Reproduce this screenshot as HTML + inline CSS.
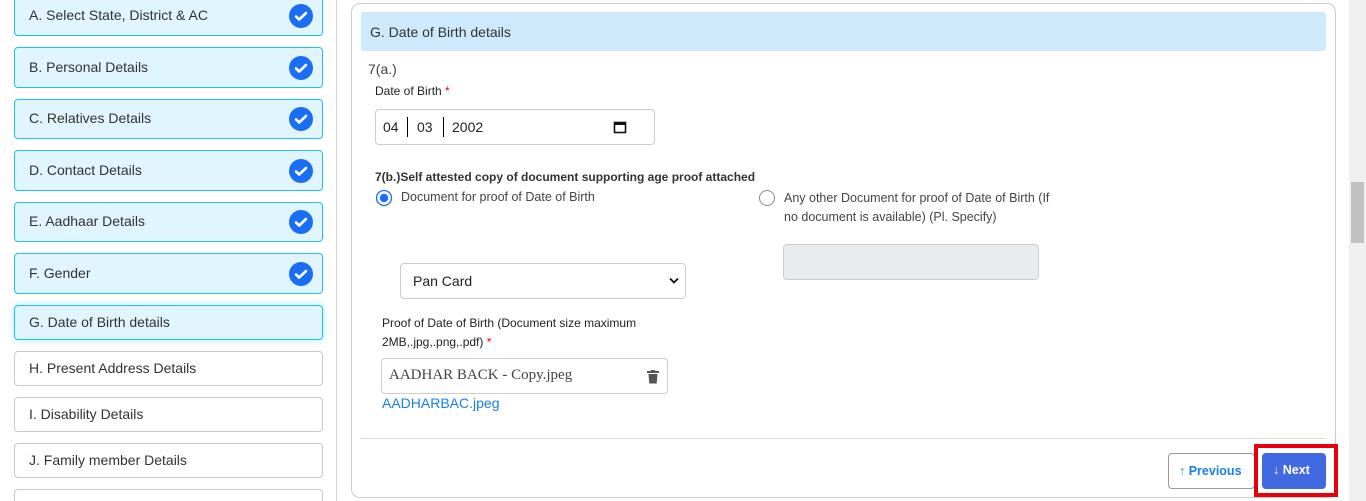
<!DOCTYPE html>
<html style="width:1366px;height:501px;overflow:hidden"><head><meta charset="utf-8"><style>
*{box-sizing:border-box;margin:0;padding:0}
body{width:1366px;height:501px;overflow:hidden;background:#fff;font-family:"Liberation Sans",Arial,sans-serif;color:#212529;position:relative}
.a{position:absolute}
.item{position:absolute;left:14px;width:309px;border:1px solid #c8c8c8;border-radius:4px;font-size:14px;color:#333;padding-left:14px;padding-bottom:2px;display:flex;align-items:center;background:#fff}
.done{background:#e0f5fd;border-color:#1ec0f0}
.chk{position:absolute;right:9px;top:50%;margin-top:-12px;width:24px;height:24px;border-radius:50%;background:#1a6ef5}
.lbl{font-size:12px;color:#222}
.star{color:#e00}
.t13{font-size:13px;color:#444}
</style></head><body>
<div class="item done" style="top:-4px;height:40px">A. Select State, District &amp; AC<span class="chk"><svg width="24" height="24"><path d="M7 12.5l3.2 3L17 9" stroke="#fff" stroke-width="2.6" fill="none" stroke-linecap="round" stroke-linejoin="round"/></svg></span></div>
<div class="item done" style="top:47px;height:41px">B. Personal Details<span class="chk"><svg width="24" height="24"><path d="M7 12.5l3.2 3L17 9" stroke="#fff" stroke-width="2.6" fill="none" stroke-linecap="round" stroke-linejoin="round"/></svg></span></div>
<div class="item done" style="top:99px;height:40px">C. Relatives Details<span class="chk"><svg width="24" height="24"><path d="M7 12.5l3.2 3L17 9" stroke="#fff" stroke-width="2.6" fill="none" stroke-linecap="round" stroke-linejoin="round"/></svg></span></div>
<div class="item done" style="top:150px;height:41px">D. Contact Details<span class="chk"><svg width="24" height="24"><path d="M7 12.5l3.2 3L17 9" stroke="#fff" stroke-width="2.6" fill="none" stroke-linecap="round" stroke-linejoin="round"/></svg></span></div>
<div class="item done" style="top:202px;height:40px">E. Aadhaar Details<span class="chk"><svg width="24" height="24"><path d="M7 12.5l3.2 3L17 9" stroke="#fff" stroke-width="2.6" fill="none" stroke-linecap="round" stroke-linejoin="round"/></svg></span></div>
<div class="item done" style="top:253px;height:41px">F. Gender<span class="chk"><svg width="24" height="24"><path d="M7 12.5l3.2 3L17 9" stroke="#fff" stroke-width="2.6" fill="none" stroke-linecap="round" stroke-linejoin="round"/></svg></span></div>
<div class="item done" style="top:305px;height:35px;box-shadow:0 0 8px rgba(30,192,240,.35)">G. Date of Birth details</div>
<div class="item" style="top:351px;height:35px">H. Present Address Details</div>
<div class="item" style="top:397px;height:35px">I. Disability Details</div>
<div class="item" style="top:443px;height:35px">J. Family member Details</div>
<div class="item" style="top:489px;height:12px;border-bottom:none;border-radius:4px 4px 0 0"></div>
<div class="a" style="left:336px;top:0;width:1px;height:501px;background:#d4d4d4"></div>
<div class="a" style="left:351px;top:3px;width:985px;height:495px;border:1px solid #ccc;border-radius:9px"></div>
<div class="a" style="left:361px;top:12px;width:965px;height:39px;background:#cde9fb;border-radius:3px;font-size:14px;color:#333;padding:12px 0 0 9px">G. Date of Birth details</div>
<div class="a t13" style="left:368px;top:61px;font-size:14px">7(a.)</div>
<div class="a lbl" style="left:375px;top:84px">Date of Birth <span class="star">*</span></div>
<div class="a" style="left:375px;top:109px;width:280px;height:36px;border:1px solid #ccc;border-radius:4px;font-size:14px;color:#222">
<span class="a" style="left:7px;top:9px">04</span><span class="a" style="left:31px;top:7px;width:1px;height:20px;background:#000"></span>
<span class="a" style="left:41px;top:9px">03</span><span class="a" style="left:67px;top:7px;width:1px;height:20px;background:#000"></span>
<span class="a" style="left:76px;top:9px">2002</span>
<svg class="a" style="left:237px;top:10px" width="14" height="14"><rect x="1.5" y="2.5" width="11" height="10" fill="none" stroke="#111" stroke-width="1.6"/><rect x="1.5" y="2" width="11" height="3" fill="#111"/></svg></div>
<div class="a lbl" style="left:375px;top:170px;font-weight:bold;color:#333">7(b.)Self attested copy of document supporting age proof attached</div>
<svg class="a" style="left:375px;top:189px" width="18" height="18"><circle cx="9" cy="9" r="7.5" fill="#fff" stroke="#1a6ef5" stroke-width="1.3"/><circle cx="9" cy="9" r="4.2" fill="#1a6ef5"/></svg>
<div class="a t13" style="left:401px;top:190px;font-size:12.5px">Document for proof of Date of Birth</div>
<svg class="a" style="left:758px;top:189px" width="18" height="18"><circle cx="9" cy="9" r="7.5" fill="#fff" stroke="#888" stroke-width="1"/></svg>
<div class="a t13" style="left:784px;top:189px;font-size:12.5px;line-height:19px;width:280px">Any other Document for proof of Date of Birth (If no document is available) (Pl. Specify)</div>
<div class="a" style="left:783px;top:244px;width:256px;height:36px;background:#e9ecef;border:1px solid #ccc;border-radius:4px"></div>
<div class="a" style="left:400px;top:263px;width:286px;height:36px;border:1px solid #ccc;border-radius:4px;font-size:14px;color:#222;padding:9px 0 0 12px">Pan Card
<svg class="a" style="left:268px;top:13px" width="10" height="8"><path d="M1 1.5l4 4 4-4" stroke="#111" stroke-width="1.8" fill="none"/></svg></div>
<div class="a lbl" style="left:382px;top:314px;line-height:19px;width:290px">Proof of Date of Birth (Document size maximum 2MB,.jpg,.png,.pdf) <span class="star">*</span></div>
<div class="a" style="left:381px;top:358px;width:287px;height:36px;border:1px solid #ccc;border-radius:4px;font-family:'Liberation Serif',serif;font-size:15px;color:#444;padding:8px 0 0 7px">AADHAR BACK - Copy.jpeg
<svg class="a" style="left:265px;top:11px" width="12" height="14"><rect x="0" y="1" width="12" height="2" fill="#555"/><rect x="4" y="0" width="4" height="2" fill="#555"/><path d="M1.5 4h9l-.8 9.5h-7.4z" fill="#555"/></svg></div>
<div class="a" style="left:382px;top:395px;font-size:14px;color:#1a7ee8">AADHARBAC.jpeg</div>
<div class="a" style="left:361px;top:438px;width:965px;height:1px;background:#ddd"></div>
<div class="a" style="left:1168px;top:453px;width:87px;height:36px;border:1px solid #999;border-radius:4px;font-size:12.5px;font-weight:bold;color:#1a7ee8;padding:10px 0 0 10px">↑ Previous</div>
<div class="a" style="left:1254px;top:444px;width:84px;height:53px;border:4px solid #e8000c"></div>
<div class="a" style="left:1262px;top:453px;width:64px;height:36px;background:#4169e1;border-radius:4px;font-size:12.5px;font-weight:bold;color:#fff;padding:10px 0 0 11px">↓ Next</div>
<div class="a" style="left:1349px;top:0;width:17px;height:501px;background:#f0f0f0"></div>
<div class="a" style="left:1351px;top:182px;width:13px;height:61px;background:#c1c1c1"></div>
</body></html>
